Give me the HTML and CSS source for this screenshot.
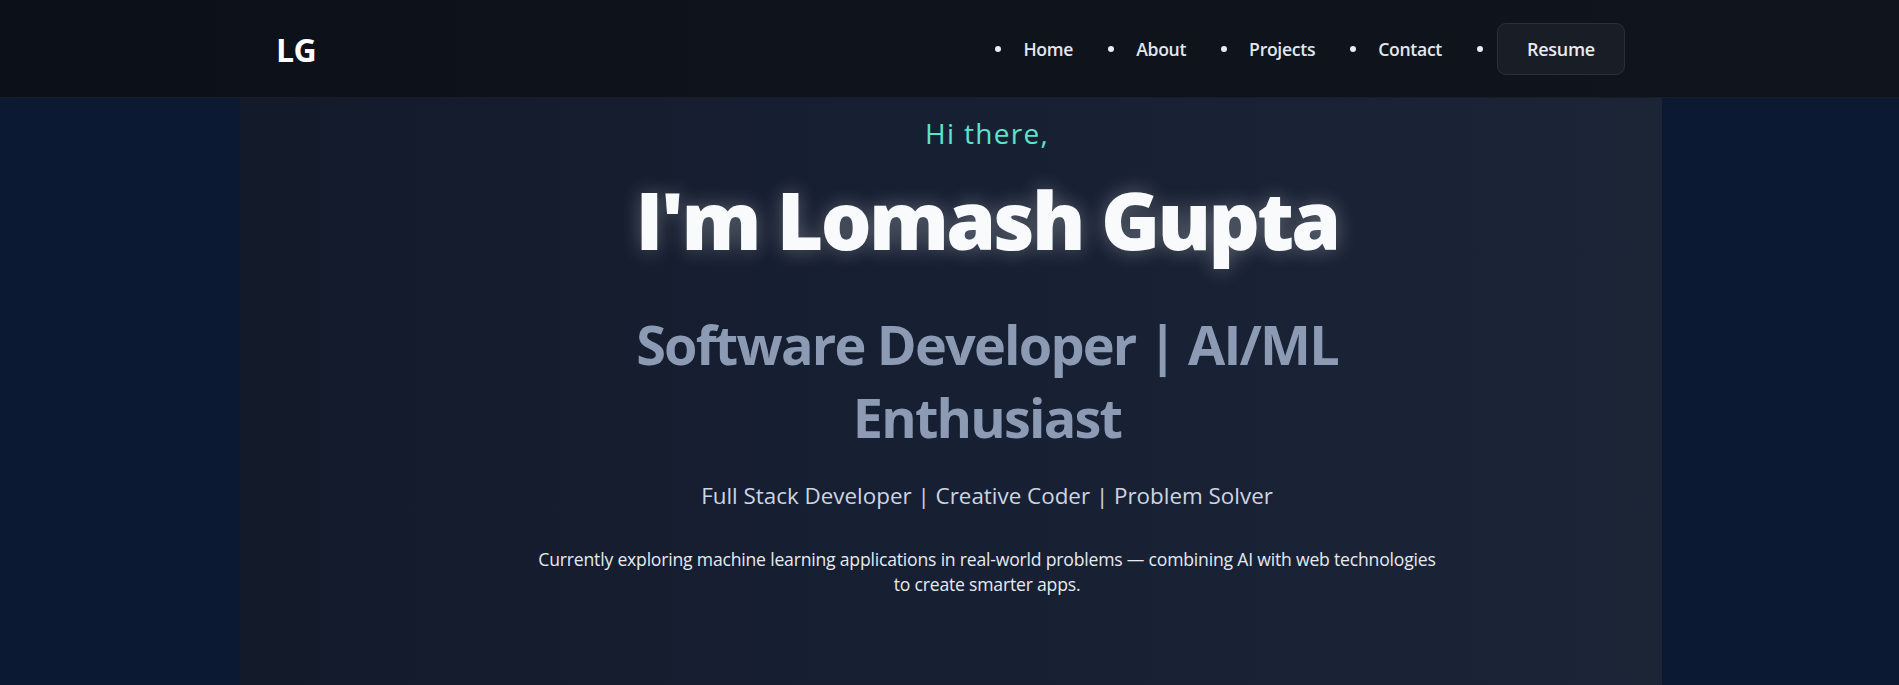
FILE: index.html
```html
<!DOCTYPE html>
<html lang="en">
<head>
<meta charset="utf-8">
<title>Lomash Gupta</title>
<link rel="stylesheet" href="styles.css">
</head>
<body>
<header class="site-header">
  <div class="header-inner">
    <a class="logo" href="#">LG</a>
    <nav class="nav">
      <ul class="nav-list">
        <li class="nav-item"><a class="nav-link" href="#">Home</a></li>
        <li class="nav-item"><a class="nav-link" href="#">About</a></li>
        <li class="nav-item"><a class="nav-link" href="#">Projects</a></li>
        <li class="nav-item"><a class="nav-link" href="#">Contact</a></li>
        <li class="nav-item nav-item--cta"><a class="resume-btn" href="#">Resume</a></li>
      </ul>
    </nav>
  </div>
</header>
<main class="page">
  <section class="panel">
    <div class="hero">
      <p class="greeting">Hi there,</p>
      <h1 class="title">I'm Lomash Gupta</h1>
      <h2 class="subtitle">Software Developer | AI/ML Enthusiast</h2>
      <p class="tagline">Full Stack Developer | Creative Coder | Problem Solver</p>
      <p class="intro">Currently exploring machine learning applications in real-world problems — combining AI with web technologies to create smarter apps.</p>
    </div>
  </section>
</main>
</body>
</html>
```

FILE: styles.css
```css
* {
  box-sizing: border-box;
}

html, body {
  margin: 0;
  padding: 0;
}

body {
  font-family: "Open Sans", "Noto Sans", sans-serif;
  background: #0b1a32;
  color: #e2e8f0;
  overflow: hidden;
}

/* Header */
.site-header {
  height: 98px;
  background: linear-gradient(90deg, #0b1019 0%, #0e131c 50%, #0f141d 100%);
  border-bottom: 1px solid #171d29;
}

.header-inner {
  width: 1422px;
  margin-left: 240px;
  height: 97px;
  padding: 0 37px 0 36px;
  display: flex;
  align-items: center;
  justify-content: space-between;
}

.logo {
  color: #ffffff;
  font-size: 32px;
  font-weight: 700;
  text-decoration: none;
  letter-spacing: -0.5px;
  line-height: 1;
  margin-top: 2px;
}

.nav-list {
  list-style: none;
  margin: 0;
  padding: 0;
  display: flex;
  align-items: center;
  gap: 35px;
}

.nav-item {
  display: flex;
  align-items: center;
}

.nav-item::before {
  content: "";
  width: 6px;
  height: 6px;
  border-radius: 50%;
  background: #e6edf7;
  margin-right: 22px;
  flex: none;
}

.nav-item--cta::before {
  margin-right: 14px;
}

.nav-link {
  color: #e2e6ee;
  font-size: 17.6px;
  font-weight: 600;
  text-decoration: none;
  letter-spacing: -0.3px;
}

.resume-btn {
  display: flex;
  align-items: center;
  justify-content: center;
  width: 128px;
  height: 52px;
  background: #191d26;
  border: 1px solid #2a2f3a;
  border-radius: 9px;
  color: #e8ebf0;
  font-size: 18px;
  font-weight: 600;
  text-decoration: none;
  letter-spacing: -0.3px;
}

/* Page */
.page {
  min-height: 587px;
}

.panel {
  width: 1422px;
  margin-left: 240px;
  min-height: 587px;
  background: linear-gradient(90deg, #131a2a 0%, #172033 50%, #1c2536 100%);
}

.hero {
  padding: 19px 0 60px 72px;
  display: flex;
  flex-direction: column;
  align-items: center;
  text-align: center;
}

.greeting {
  margin: 0;
  font-size: 28px;
  line-height: 33.6px;
  color: #5ee3cb;
  letter-spacing: 1.3px;
  font-weight: 400;
}

.title {
  margin: 23px 0 0;
  font-size: 80px;
  line-height: 90px;
  font-weight: 800;
  color: #f8fafc;
  letter-spacing: -2.7px;
  text-shadow: 0 0 20px rgba(255, 255, 255, 0.3);
}

.subtitle {
  margin: 44px 0 0;
  max-width: 730px;
  font-size: 54px;
  line-height: 73.5px;
  font-weight: 700;
  color: #8c9bb3;
  letter-spacing: -1.8px;
}

.tagline {
  margin: 25px 0 0;
  font-size: 22.4px;
  line-height: 31.4px;
  color: #cdd5e2;
  font-weight: 400;
}

.intro {
  margin: 36px 0 0;
  max-width: 904px;
  font-size: 17.6px;
  line-height: 25px;
  color: #e6eaf1;
  letter-spacing: -0.2px;
}
```
